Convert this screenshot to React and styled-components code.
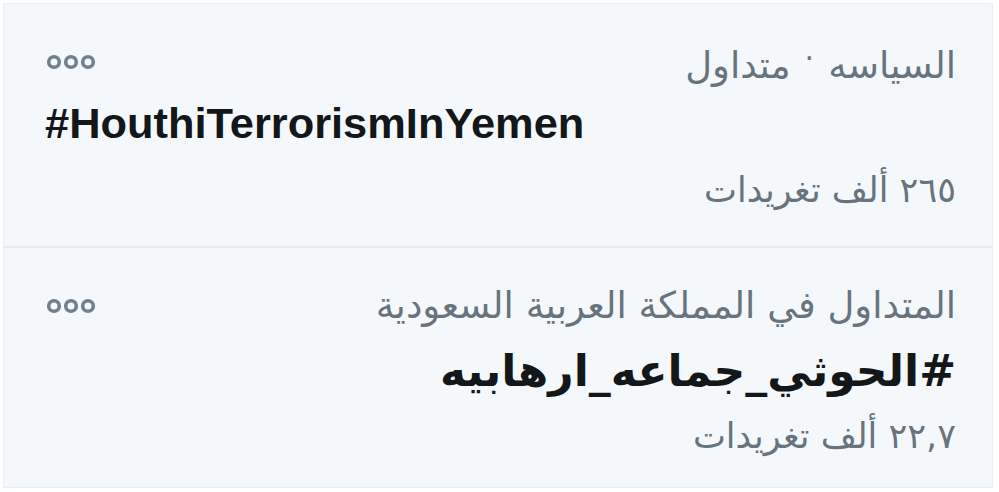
import styled, { createGlobalStyle } from "styled-components";

const GlobalStyle = createGlobalStyle`
  html, body {
    margin: 0;
    padding: 0;
    background: #ffffff;
  }
  body {
    font-family: "DejaVu Sans", "Noto Sans", sans-serif;
  }
`;

const Page = styled.div`
  padding: 3px 6px 5px 3px;
`;

const Panel = styled.div`
  background-color: #f5f8fa;
  border: 1px solid #e9eef2;
  display: flex;
  flex-direction: column;
`;

const Trend = styled.div`
  display: flex;
  flex-direction: column;
  padding: ${(p) => (p.last ? "38px 36px 31px 41px" : "38px 36px 36px 41px")};
  border-bottom: ${(p) => (p.last ? "none" : "2px solid #e6ebef")};
`;

const TopRow = styled.div`
  display: flex;
  justify-content: space-between;
  align-items: center;
  height: 40px;
`;

const Category = styled.span`
  font-size: 37px;
  color: #67747e;
  line-height: 40px;
  white-space: nowrap;
`;

const Dot = styled.span`
  display: inline-block;
  font-size: 30px;
  vertical-align: 9px;
  margin: 0 14px;
`;

const More = styled.svg`
  width: 50px;
  height: 16px;
  flex-shrink: 0;
  margin-left: 1px;
`;

const Hashtag = styled.div`
  font-family: ${(p) =>
    p.latin ? '"Liberation Sans", Arial, sans-serif' : '"DejaVu Sans", sans-serif'};
  font-weight: 700;
  font-size: ${(p) => (p.latin ? "43.4px" : "44px")};
  color: #14171a;
  line-height: 60px;
  margin-top: ${(p) => p.gap}px;
  text-align: start;
  white-space: nowrap;
`;

const Count = styled.div`
  font-size: 35px;
  color: #67747e;
  line-height: 40px;
  margin-top: ${(p) => p.gap}px;
`;

function MoreIcon() {
  return (
    <More viewBox="0 0 50 16">
      {[8, 25, 42].map((cx) => (
        <circle key={cx} cx={cx} cy="8" r="5.3" fill="none" stroke="#6f808e" strokeWidth="3.6" />
      ))}
    </More>
  );
}

const trends = [
  {
    category: ["السياسه", "متداول"],
    tag: "#HouthiTerrorismInYemen",
    latin: true,
    count: "٢٦٥ ألف تغريدات",
    gaps: [11, 17],
  },
  {
    category: ["المتداول في المملكة العربية السعودية"],
    tag: "#الحوثي_جماعه_ارهابيه",
    latin: false,
    count: "٢٢,٧ ألف تغريدات",
    gaps: [15, 15],
  },
];

export default function App() {
  return (
    <>
      <GlobalStyle />
      <Page>
        <Panel dir="rtl">
          {trends.map((t, i) => (
            <Trend key={t.tag} last={i === trends.length - 1}>
              <TopRow>
                <Category>
                  {t.category[0]}
                  {t.category[1] && (
                    <>
                      <Dot>·</Dot>
                      {t.category[1]}
                    </>
                  )}
                </Category>
                <MoreIcon />
              </TopRow>
              <Hashtag dir="auto" latin={t.latin} gap={t.gaps[0]}>
                {t.tag}
              </Hashtag>
              <Count gap={t.gaps[1]}>{t.count}</Count>
            </Trend>
          ))}
        </Panel>
      </Page>
    </>
  );
}
